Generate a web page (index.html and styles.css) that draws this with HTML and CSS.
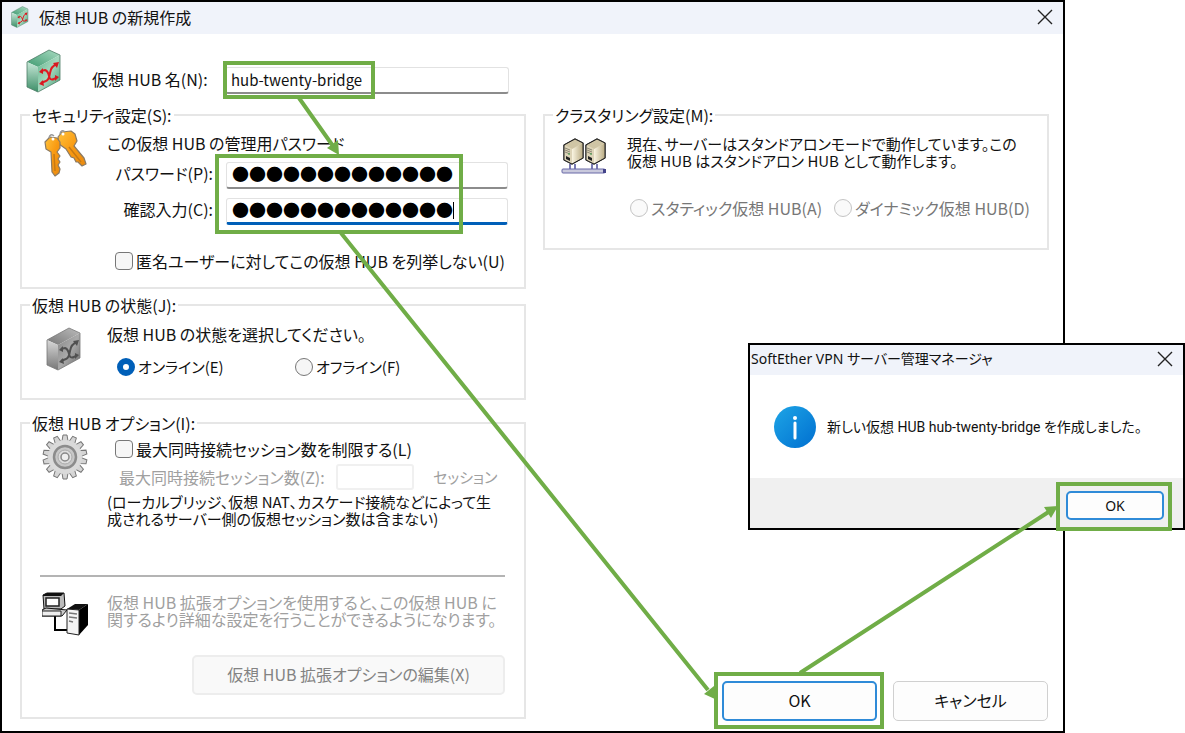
FILE: index.html
```html
<!DOCTYPE html>
<html lang="ja">
<head>
<meta charset="utf-8">
<title>仮想 HUB の新規作成</title>
<link rel="stylesheet" href="styles.css">
</head>
<body>
<svg class="defs" width="0" height="0" aria-hidden="true">
  <defs>
    <linearGradient id="greenTop" x1="0" y1="1" x2="1" y2="0"><stop offset="0" stop-color="#3f9a70"/><stop offset="1" stop-color="#a9dcc2"/></linearGradient>
    <linearGradient id="greenSide" x1="0" y1="0" x2="0" y2="1"><stop offset="0" stop-color="#c8e8d8"/><stop offset="1" stop-color="#3d8f68"/></linearGradient>
    <linearGradient id="greenFace" x1="0" y1="0" x2="1" y2="1"><stop offset="0" stop-color="#62b58c"/><stop offset=".5" stop-color="#a5d8be"/><stop offset="1" stop-color="#3f9a70"/></linearGradient>
    <linearGradient id="grayTop" x1="0" y1="1" x2="1" y2="0"><stop offset="0" stop-color="#777"/><stop offset="1" stop-color="#bbb"/></linearGradient>
    <linearGradient id="graySide" x1="0" y1="0" x2="0" y2="1"><stop offset="0" stop-color="#d8d8d8"/><stop offset="1" stop-color="#777"/></linearGradient>
    <linearGradient id="grayFace" x1="0" y1="0" x2="1" y2="1"><stop offset="0" stop-color="#858585"/><stop offset=".5" stop-color="#aaa"/><stop offset="1" stop-color="#666"/></linearGradient>
    <linearGradient id="gold" x1="0" y1="0" x2="1" y2="1"><stop offset="0" stop-color="#ffc33c"/><stop offset=".5" stop-color="#f99a12"/><stop offset="1" stop-color="#e98a10"/></linearGradient>
    <linearGradient id="beige" x1="0" y1="0" x2="1" y2="0"><stop offset="0" stop-color="#faf5e2"/><stop offset="1" stop-color="#b9ab83"/></linearGradient>
    <linearGradient id="infoBlue" x1="0" y1="0" x2="1" y2="1"><stop offset="0" stop-color="#1ea5e6"/><stop offset="1" stop-color="#006fd0"/></linearGradient>
    <symbol id="hubGreen" viewBox="0 0 36 44">
      <path d="M1 13 23 1 34 6 12 18Z" fill="url(#greenTop)"/>
      <path d="M1 13 12 18V43L1 38Z" fill="url(#greenSide)"/>
      <path d="M12 18 34 6V31L12 43Z" fill="url(#greenFace)"/>
      <path d="M1 13 23 1 34 6V31L12 43 1 38Z" fill="none" stroke="#4c7b66" stroke-width=".8"/>
      <path d="M15 22 19 21Q22 22 23 27T28 30L31 28M15 34 20 32Q23 31 24 24T31 15" fill="none" stroke="#e01b22" stroke-width="2"/>
      <path d="M17 19V25L13 23ZM17 31 13 35 18 37ZM27 14 33 13 31 19ZM29 26 33 28 29 32Z" fill="#d71920"/>
    </symbol>
    <symbol id="hubGray" viewBox="0 0 36 44">
      <path d="M1 13 23 1 34 6 12 18Z" fill="url(#grayTop)"/>
      <path d="M1 13 12 18V43L1 38Z" fill="url(#graySide)"/>
      <path d="M12 18 34 6V31L12 43Z" fill="url(#grayFace)"/>
      <path d="M1 13 23 1 34 6V31L12 43 1 38Z" fill="none" stroke="#777" stroke-width=".8"/>
      <path d="M15 22 19 21Q22 22 23 27T28 30L31 28M15 34 20 32Q23 31 24 24T31 15" fill="none" stroke="#505050" stroke-width="2"/>
      <path d="M17 19V25L13 23ZM17 31 13 35 18 37ZM27 14 33 13 31 19ZM29 26 33 28 29 32Z" fill="#505050"/>
    </symbol>
    <symbol id="serverBox" viewBox="0 0 22 28">
      <path d="M2 7 13 1 21 5V20L10 26 2 22Z" fill="#e9e0c3" stroke="#222" stroke-width="1.2"/>
      <path d="M10 11 21 5V20L10 26Z" fill="url(#beige)"/>
      <path d="M2 7 13 1 21 5 10 11Z" fill="#cfc5a5"/>
      <path d="M2 7 10 11V26L2 22Z" fill="#ddd4b8"/>
      <path d="M3 10 8 12M3 12 8 14M3 14 8 16" stroke="#8d8875"/>
      <path d="M4 18 8 20V23L4 21Z" fill="#222"/>
      <path d="M6 16H8" stroke="#3c9c4a"/>
      <path d="M2 7 13 1 21 5V20L10 26 2 22Z" fill="none" stroke="#222"/>
    </symbol>
  </defs>
</svg>

<main class="window">
  <header class="titlebar">
    <svg class="titlebar-icon" aria-hidden="true"><use href="#hubGreen"/></svg>
    <h1 class="title">仮想 HUB の新規作成</h1>
    <button class="close" type="button" aria-label="閉じる"><svg width="16" height="16" viewBox="0 0 16 16"><path d="M1 1 15 15M15 1 1 15"/></svg></button>
  </header>

  <form class="content">
    <div class="name-row">
      <svg class="hub-icon" aria-hidden="true"><use href="#hubGreen"/></svg>
      <label class="name-label" for="hubName">仮想 HUB 名(N):</label>
      <input class="field" id="hubName" type="text" value="hub-twenty-bridge">
    </div>

    <div class="column">
      <fieldset class="group security">
        <legend>セキュリティ設定(S):</legend>
        <svg class="icon keys" viewBox="0 0 46 50" aria-hidden="true">
          <g fill="url(#gold)" stroke="#8b7a63" stroke-width="1.2" stroke-linejoin="round">
            <path d="M15 8 19 3 28 2 32 5 34 12 31 17 41 29 43 35 39 37 35 33 33 33 31 29 28 28 23 20 16 15Z"/>
            <path d="M2 13 7 8 14 9 17 13 17 19 14 23 17 27 15 30 17 33 15 36 17 40 16 44 12 47 9 43 8 23 3 20Z"/>
          </g>
          <path d="M26 18 38 33M11 25 12 42" stroke="#c87a13" stroke-width="1.5"/>
          <circle cx="10" cy="10" r="1.5" fill="#fff"/><circle cx="20" cy="5" r="1.5" fill="#fff"/>
          <path d="M6 9Q7 4 11 7M17 5Q18 0 22 3" fill="none" stroke="#999" stroke-width="1.5"/>
        </svg>
        <div class="group-body">
          <p class="line">この仮想 HUB の管理用パスワード</p>
          <div class="form-row">
            <label for="pass">パスワード(P):</label>
            <input class="field secret" id="pass" type="text" value="●●●●●●●●●●●●●" autocomplete="off">
          </div>
          <div class="form-row confirm">
            <label for="confirm">確認入力(C):</label>
            <span class="caret-box"><input class="field secret active" id="confirm" type="text" value="●●●●●●●●●●●●●" autocomplete="off"></span>
          </div>
          <label class="choice anonymous"><input type="checkbox">匿名ユーザーに対してこの仮想 HUB を列挙しない(U)</label>
        </div>
      </fieldset>

      <fieldset class="group status">
        <legend>仮想 HUB の状態(J):</legend>
        <svg class="icon hub-gray" aria-hidden="true"><use href="#hubGray"/></svg>
        <div class="group-body">
          <p class="line">仮想 HUB の状態を選択してください。</p>
          <div class="radios">
            <label class="choice"><input type="radio" name="state" checked>オンライン(E)</label>
            <label class="choice"><input type="radio" name="state">オフライン(F)</label>
          </div>
        </div>
      </fieldset>

      <fieldset class="group options">
        <legend>仮想 HUB オプション(I):</legend>
        <svg class="icon gear" viewBox="-23 -23 46 46" aria-hidden="true">
          <g fill="#d5d5d5" stroke="#777" stroke-width="1">
            <path id="tooth" d="M-3-16-2-22H2L3-16V16L2 22H-2L-3 16Z"/>
            <use href="#tooth" transform="rotate(25.7)"/><use href="#tooth" transform="rotate(51.4)"/><use href="#tooth" transform="rotate(77.1)"/><use href="#tooth" transform="rotate(102.8)"/><use href="#tooth" transform="rotate(128.6)"/><use href="#tooth" transform="rotate(154.3)"/>
          </g>
          <circle r="17" fill="#dadada"/>
          <circle r="11" fill="#c8c8c8" stroke="#8c8c8c" stroke-width="2.5"/>
          <circle r="7" fill="#ddd" stroke="#aaa"/>
          <circle r="4" fill="#eee" stroke="#888" stroke-width="1.5"/>
        </svg>
        <div class="group-body">
          <label class="choice limit"><input type="checkbox">最大同時接続セッション数を制限する(L)</label>
          <div class="session-row">
            <label for="sessions">最大同時接続セッション数(Z):</label>
            <input class="field" id="sessions" type="text" disabled>
            <span>セッション</span>
          </div>
          <p class="note">(ローカルブリッジ、仮想 NAT、カスケード接続などによって生<br>成されるサーバー側の仮想セッション数は含まない)</p>
        </div>
        <hr class="divider">
        <svg class="icon computers" viewBox="0 0 46 44" aria-hidden="true">
          <path d="M13 23V38H26" fill="none" stroke="#000" stroke-width="2"/>
          <path d="M1 3 5 1H22L23 14 19 17H2Z" fill="#bbb" stroke="#111"/>
          <path d="M1 3 5 1H22L19 4H1Z" fill="#111"/>
          <path d="M4 6H17V14H4Z" fill="#fff" stroke="#222" stroke-width="1.5"/>
          <path d="M0 18 4 16 25 18 20 24H0Z" fill="#ccc" stroke="#111"/><path d="M0 19H19V24H0Z" fill="#eee" stroke="#222"/>
          <path d="M25 17 33 12H46L37 18Z" fill="#111"/>
          <path d="M37 18 46 12V33L37 43Z" fill="#000"/>
          <path d="M25 17 37 18V43L25 41Z" fill="#f4f4f4" stroke="#222"/>
          <path d="M27 21 35 22M27 25 35 26M27 29 31 30" stroke="#777" stroke-width="1.5"/>
        </svg>
        <p class="note extended">仮想 HUB 拡張オプションを使用すると、この仮想 HUB に<br>関するより詳細な設定を行うことができるようになります。</p>
        <button class="button edit" type="button" disabled>仮想 HUB 拡張オプションの編集(X)</button>
      </fieldset>
    </div>

    <div class="column right">
      <fieldset class="group cluster">
        <legend>クラスタリング設定(M):</legend>
        <svg class="icon servers" viewBox="0 0 46 38" aria-hidden="true">
          <path d="M9 26V33M14 26V33M31 26V33M36 26V33" stroke="#50509a" stroke-width="1.5"/>
          <use href="#serverBox" x="1" y="0" width="22" height="28"/><use href="#serverBox" x="23" y="0" width="22" height="28"/>
          <rect x="1" y="31" width="43" height="4" rx="1" fill="#c9c9dc" stroke="#6868a8"/><path d="M42 31H45V35H42Z" fill="#44448a"/>
        </svg>
        <div class="group-body">
          <p class="note">現在、サーバーはスタンドアロンモードで動作しています。この<br>仮想 HUB はスタンドアロン HUB として動作します。</p>
          <div class="radios">
            <label class="choice"><input type="radio" name="cluster" disabled>スタティック仮想 HUB(A)</label>
            <label class="choice"><input type="radio" name="cluster" disabled>ダイナミック仮想 HUB(D)</label>
          </div>
        </div>
      </fieldset>
      <div class="actions">
        <button class="button default" type="button">OK</button>
        <button class="button" type="button">キャンセル</button>
      </div>
    </div>
  </form>
</main>

<section class="popup" role="dialog" aria-labelledby="popupTitle">
  <header class="titlebar">
    <h2 class="title" id="popupTitle">SoftEther VPN サーバー管理マネージャ</h2>
    <button class="close" type="button" aria-label="閉じる"><svg width="16" height="16" viewBox="0 0 16 16"><path d="M1 1 15 15M15 1 1 15"/></svg></button>
  </header>
  <div class="message">
    <svg class="info" viewBox="0 0 42 42" aria-hidden="true"><circle cx="21" cy="21" r="21" fill="url(#infoBlue)"/><circle cx="21" cy="12" r="2" fill="#fff"/><path d="M21 17V32" stroke="#fff" stroke-width="3" stroke-linecap="round"/></svg>
    <p class="message-text">新しい仮想 HUB hub-twenty-bridge を作成しました。</p>
  </div>
  <footer class="popup-actions"><button class="button default" type="button">OK</button></footer>
</section>

<svg class="callouts" viewBox="0 0 1185 733" preserveAspectRatio="none" aria-hidden="true">
  <g fill="none" stroke="#70ad47" stroke-width="4">
    <rect x="225" y="63" width="148" height="34"/>
    <rect x="217" y="156" width="244" height="76"/>
    <rect x="716" y="674" width="166" height="53"/>
    <rect x="1058" y="484" width="112" height="45"/>
    <path d="M299 98 333 146M341 233 708 690M800 673 1050 511"/>
  </g>
  <path d="M339 155 327 148 338 140ZM717 700 704 694 714 686ZM1058 506 1051 518 1044 507Z" fill="#70ad47"/>
</svg>
</body>
</html>
```

FILE: styles.css
```css
* { box-sizing: border-box; }

body {
  margin: 0;
  position: relative;
  min-height: 100vh;
  background: #fff;
  color: #111;
  font: 16px/20px "Noto Sans CJK JP", sans-serif;
  font-feature-settings: "palt";
}

h1, h2, p, fieldset, legend { margin: 0; padding: 0; }
button, input { font: inherit; font-feature-settings: inherit; color: inherit; margin: 0; }
.defs { position: absolute; }

.window {
  display: flex;
  flex-direction: column;
  min-height: 100vh;
  margin-right: 120px;
  border: 2px solid #000;
}

.titlebar {
  display: flex;
  align-items: center;
  height: 32px;
  padding: 0 10px 3px 8px;
  background: #f0f3fa;
}
.titlebar-icon { width: 20px; height: 22px; margin-right: 9px; }
.title { flex: 1; font-size: 16px; font-weight: 400; }
.close { display: flex; padding: 0; border: 0; background: none; }
.close path { stroke: #222; stroke-width: 1.4; fill: none; }

.content {
  flex: 1;
  display: grid;
  grid-template-columns: 1fr 1fr;
  grid-template-rows: auto 1fr;
  column-gap: 17px;
  padding: 14px 14px 10px 18px;
}

.name-row {
  display: grid;
  grid-template-columns: 72px 121px 1fr;
  align-items: end;
  padding: 0 17px 11px 0;
}
.hub-icon { width: 36px; height: 46px; margin-left: 6px; }
.name-label { padding-bottom: 5px; white-space: nowrap; }
.name-row .field { margin-left: 12px; width: auto; }

.field {
  width: 100%;
  min-width: 0;
  height: 27px;
  padding: 0 5px 2px;
  border: 1px solid #e2e2e2;
  border-bottom: 2px solid #8c8c8c;
  border-radius: 3px;
  background: #fff;
  font-size: 15px;
  outline: none;
}
.secret { padding-bottom: 3px; font-size: 17px; color: #000; font-feature-settings: normal; }
.active { border-bottom-color: #005fb8; border-bottom-width: 3px; }
.caret-box { position: relative; display: flex; }
.caret-box::after {
  content: "";
  position: absolute;
  left: 227px;
  top: 4px;
  width: 1px;
  height: 17px;
  background: #000;
}

.column { grid-row: 2; display: flex; flex-direction: column; min-width: 0; }
.right { grid-column: 2; justify-content: space-between; }

.group {
  display: grid;
  grid-template-columns: 77px 1fr;
  min-width: 0;
  padding-left: 8px;
  padding-right: 16px;
  border: 2px solid #e6e6e6;
}
.group legend { padding: 0 2px; }
.group-body { min-width: 0; white-space: nowrap; }
.icon { justify-self: start; }
.note { font-size: 15px; line-height: 17px; white-space: nowrap; }

.security { padding-top: 4px; padding-bottom: 16px; }
.security .group-body { padding-top: 4px; }
.keys { width: 46px; height: 50px; margin-left: 13px; }
.form-row {
  display: grid;
  grid-template-columns: 106px 1fr;
  column-gap: 13px;
  align-items: center;
  margin-top: 9px;
  text-align: right;
}
.form-row label { padding-bottom: 6px; }
.anonymous { margin-top: 26px; }

.choice { display: flex; align-items: center; gap: 3px; padding-left: 8px; }
.choice input {
  appearance: none;
  flex: none;
  width: 18px;
  height: 18px;
  border: 1px solid #777;
  border-radius: 4px;
  background: #f6f6f6;
}
.choice input[type="radio"] { border-radius: 50%; }
.choice input[type="radio"]:checked { border: 6px solid #005fb8; background: #fff; }
.choice input:disabled { border-color: #c4c4c4; background: #fafafa; }
.choice:has(input:disabled) { color: #777; }

.status { margin-top: 6px; padding-top: 9px; padding-bottom: 21px; }
.hub-gray { width: 36px; height: 46px; margin: 2px 0 -4px 16px; }
.radios { display: grid; grid-template-columns: 178px 1fr; margin-top: 13px; }
.status .choice { padding-left: 10px; font-size: 15px; }

.options { margin-top: 13px; padding-bottom: 22px; }
.options .group-body { padding-top: 6px; }
.gear { width: 46px; height: 46px; margin: 1px 0 0 12px; }
.session-row {
  display: grid;
  grid-template-columns: 217px 78px 1fr;
  align-items: center;
  margin: 5px 0 3px;
  padding-left: 12px;
  color: #a0a0a0;
}
.session-row .field { height: 26px; border: 2px solid #f0f0f0; }
.session-row span { padding-left: 19px; font-size: 15px; }
.divider {
  grid-column: 1 / -1;
  width: auto;
  margin: 48px 3px 15px 10px;
  border: 0;
  border-top: 2px solid #b4b4b4;
}
.computers { width: 46px; height: 44px; margin-left: 12px; }
.extended { padding-top: 2px; color: #a0a0a0; font-size: 16px; }

.button {
  width: 155px;
  height: 40px;
  padding: 0 0 2px;
  border: 1px solid #d0d0d0;
  border-radius: 5px;
  background: #fdfdfd;
}
.default { border: 2px solid #2f8bd8; }
.edit {
  grid-column: 1 / -1;
  justify-self: end;
  width: 313px;
  margin: 19px 3px 0 0;
  border: 2px solid #ededed;
  background: #f9f9f9;
  color: #838383;
}

.cluster { grid-template-columns: 74px 1fr; padding-top: 10px; padding-bottom: 30px; }
.servers { width: 46px; height: 38px; margin: 3px 0 0 8px; }
.cluster .radios { grid-template-columns: 204px 1fr; margin-top: 29px; }
.cluster .choice { padding-left: 3px; }

.actions { display: flex; justify-content: flex-end; gap: 16px; padding-right: 1px; }

.popup {
  position: absolute;
  top: 343px;
  right: 0;
  width: 437px;
  border: 2px solid #000;
  background: #fff;
  font-family: "Noto Sans", "Noto Sans CJK JP", sans-serif;
  font-size: 14px;
}
.popup .titlebar { height: 30px; padding-left: 1px; }
.popup .title { font-size: 14px; }
.message { display: flex; align-items: center; gap: 11px; height: 103px; padding-left: 24px; }
.info { flex: none; width: 42px; height: 42px; }
.message-text { font-family: Roboto, "Noto Sans CJK JP", sans-serif; white-space: nowrap; }
.popup-actions { display: flex; justify-content: flex-end; padding: 13px 19px 8px; background: #f0f0f0; }
.popup-actions .button { width: 98px; height: 29px; padding: 0; }

.callouts { position: absolute; left: 0; top: 0; width: 100%; height: 100%; pointer-events: none; }
```
